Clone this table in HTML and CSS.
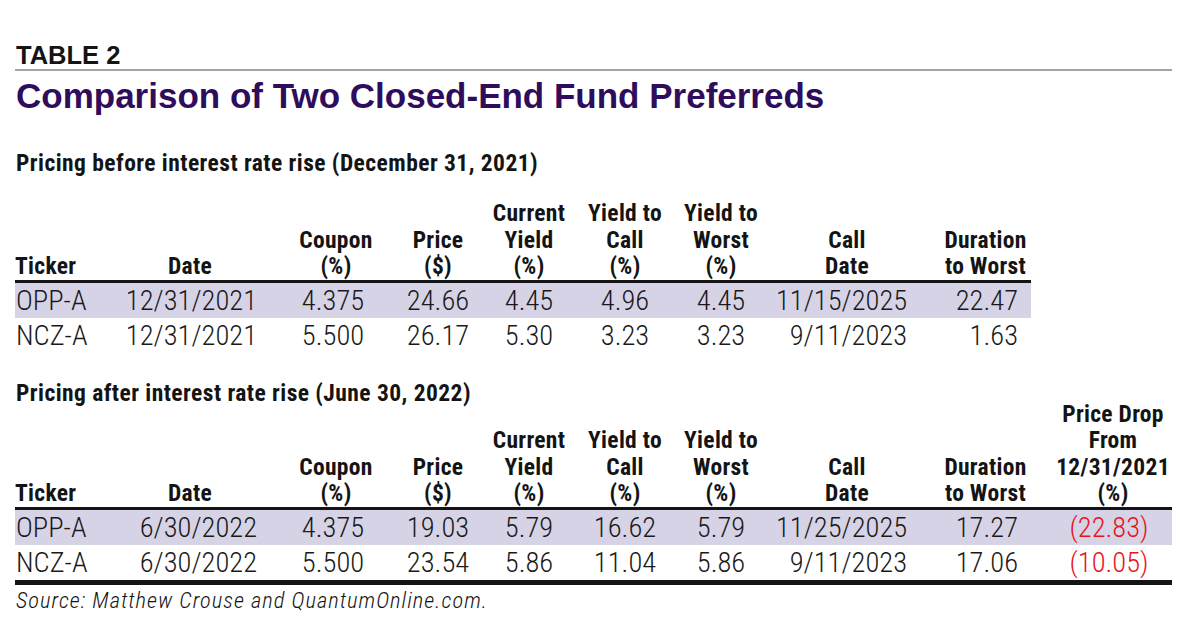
FILE: index.html
```html
<!DOCTYPE html>
<html lang="en">
<head>
<meta charset="utf-8">
<title>Table 2 - Comparison of Two Closed-End Fund Preferreds</title>
<link rel="stylesheet" href="styles.css">
</head>
<body>
<div class="page">
  <div class="kicker">TABLE 2</div>
  <h1 class="title">Comparison of Two Closed-End Fund Preferreds</h1>

  <h2 class="section s1">Pricing before interest rate rise (December 31, 2021)</h2>
  <div class="tbl t9">
    <div class="row head">
      <div class="c c1">Ticker</div>
      <div class="c c2">Date</div>
      <div class="c c3">Coupon<br>(%)</div>
      <div class="c c4">Price<br>($)</div>
      <div class="c c5">Current<br>Yield<br>(%)</div>
      <div class="c c6">Yield to<br>Call<br>(%)</div>
      <div class="c c7">Yield to<br>Worst<br>(%)</div>
      <div class="c c8">Call<br>Date</div>
      <div class="c c9">Duration<br>to Worst</div>
    </div>
    <div class="row data band">
      <div class="c c1">OPP-A</div>
      <div class="c c2">12/31/2021</div>
      <div class="c c3">4.375</div>
      <div class="c c4">24.66</div>
      <div class="c c5">4.45</div>
      <div class="c c6">4.96</div>
      <div class="c c7">4.45</div>
      <div class="c c8">11/15/2025</div>
      <div class="c c9">22.47</div>
    </div>
    <div class="row data">
      <div class="c c1">NCZ-A</div>
      <div class="c c2">12/31/2021</div>
      <div class="c c3">5.500</div>
      <div class="c c4">26.17</div>
      <div class="c c5">5.30</div>
      <div class="c c6">3.23</div>
      <div class="c c7">3.23</div>
      <div class="c c8">9/11/2023</div>
      <div class="c c9">1.63</div>
    </div>
  </div>

  <h2 class="section s2">Pricing after interest rate rise (June 30, 2022)</h2>
  <div class="tbl t10">
    <div class="row head">
      <div class="c c1">Ticker</div>
      <div class="c c2">Date</div>
      <div class="c c3">Coupon<br>(%)</div>
      <div class="c c4">Price<br>($)</div>
      <div class="c c5">Current<br>Yield<br>(%)</div>
      <div class="c c6">Yield to<br>Call<br>(%)</div>
      <div class="c c7">Yield to<br>Worst<br>(%)</div>
      <div class="c c8">Call<br>Date</div>
      <div class="c c9">Duration<br>to Worst</div>
      <div class="c c10">Price Drop<br>From<br>12/31/2021<br>(%)</div>
    </div>
    <div class="row data band">
      <div class="c c1">OPP-A</div>
      <div class="c c2">6/30/2022</div>
      <div class="c c3">4.375</div>
      <div class="c c4">19.03</div>
      <div class="c c5">5.79</div>
      <div class="c c6">16.62</div>
      <div class="c c7">5.79</div>
      <div class="c c8">11/25/2025</div>
      <div class="c c9">17.27</div>
      <div class="c c10 neg">(22.83)</div>
    </div>
    <div class="row data last">
      <div class="c c1">NCZ-A</div>
      <div class="c c2">6/30/2022</div>
      <div class="c c3">5.500</div>
      <div class="c c4">23.54</div>
      <div class="c c5">5.86</div>
      <div class="c c6">11.04</div>
      <div class="c c7">5.86</div>
      <div class="c c8">9/11/2023</div>
      <div class="c c9">17.06</div>
      <div class="c c10 neg">(10.05)</div>
    </div>
  </div>
  <p class="source">Source: Matthew Crouse and QuantumOnline.com.</p>
</div>
</body>
</html>
```
FILE: styles.css
```css
html, body {
  margin: 0;
  padding: 0;
  background: #ffffff;
}

.page {
  padding: 41px 0 0 15px;
  width: 1157px;
  color: #141414;
}

.kicker {
  font-family: "Liberation Sans", Arial, sans-serif;
  font-weight: bold;
  font-size: 25.5px;
  line-height: 28px;
  padding-left: 1px;
  border-bottom: 2px solid #a3a3a3;
}

.title {
  margin: 5px 0 0 0;
  padding-left: 1px;
  font-family: "Liberation Sans", Arial, sans-serif;
  font-weight: bold;
  font-size: 35px;
  line-height: 40px;
  color: #2e0d5c;
  white-space: nowrap;
}

.section {
  margin: 0;
  padding-left: 1px;
  font-family: "Roboto", sans-serif;
  font-stretch: 75%;
  font-weight: 700;
  font-size: 23.5px;
  line-height: 22px;
  letter-spacing: 0.45px;
  white-space: nowrap;
}

.s1 { margin-top: 36px; }
.s2 { margin-top: 29px; }

.tbl {
  display: grid;
}
.t9 { width: 1016px; margin-top: 26px; }
.t10 { width: 1157px; margin-top: -3px; }

.row {
  display: grid;
  grid-template-columns: 95px 160px 132px 72px 110px 82px 110px 142px 113px;
}
.t10 .row {
  grid-template-columns: 95px 160px 132px 72px 110px 82px 110px 142px 113px 141px;
}

.head {
  border-bottom: 3px solid #141414;
  font-family: "Roboto", sans-serif;
  font-stretch: 75%;
  font-weight: 700;
  font-size: 23.5px;
  line-height: 26.5px;
  letter-spacing: 0.3px;
  white-space: nowrap;
}
.head .c {
  display: flex;
  justify-content: center;
  align-items: flex-end;
  text-align: center;
}
.head .c1 { justify-content: flex-start; padding-left: 0; }
.head .c9 { padding-left: 22px; }
.head .c10 { padding-left: 23px; }

.data {
  height: 35px;
  font-family: "Roboto", sans-serif;
  font-stretch: 75%;
  font-weight: 340;
  font-size: 28.5px;
  line-height: 35px;
  letter-spacing: 0;
  white-space: nowrap;
  color: #1a1a1a;
}
.data .c { text-align: center; }
.data .c1 { text-align: left; padding-left: 1px; }
.data .c2 { text-align: right; padding-right: 13px; }
.data .c3 { padding-right: 6px; }
.data .c8 { text-align: right; padding-right: 11px; }
.data .c9 { text-align: right; padding-right: 13px; }
.data .c10 { padding-left: 15px; }

.band { background: #d7d3e6; }
.last { border-bottom: 5px solid #141414; }

.neg { color: #e8141c; }

.source {
  margin: 2px 0 0 0;
  padding-left: 1px;
  font-family: "Roboto", sans-serif;
  font-stretch: 75%;
  font-style: italic;
  font-weight: 330;
  font-size: 22.5px;
  line-height: 26px;
  letter-spacing: 1px;
  white-space: nowrap;
}
```
